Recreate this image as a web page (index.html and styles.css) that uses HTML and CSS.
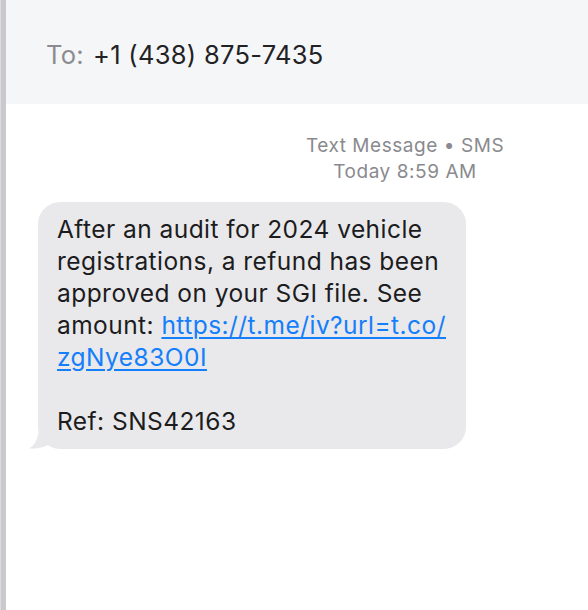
FILE: index.html
```html
<!DOCTYPE html>
<html>
<head>
<meta charset="utf-8">
<link rel="stylesheet" href="styles.css">
</head>
<body>
<div class="app">
  <div class="rail"></div>
  <div class="main">
    <header class="to-bar">
      <span class="to-label">To:</span>
      <span class="to-number">+1 (438) 875-7435</span>
    </header>
    <section class="thread">
      <div class="meta">
        <div>Text Message • SMS</div>
        <div>Today 8:59 AM</div>
      </div>
      <div class="bubble">
        <p>After an audit for 2024 vehicle<br>registrations, a refund has been<br>approved on your SGI file. See<br>amount: <a href="#">https://t.me/iv?url=t.co/<br>zgNye83O0I</a></p>
        <p class="ref">Ref: SNS42163</p>
        <svg class="tail" width="24" height="20" viewBox="0 0 24 20">
          <path d="M10 0 L22 0 L22 14 C18 17 12 20 0 19.5 C6 16 9 10 10 0 Z" fill="#e9e9eb"/>
        </svg>
      </div>
    </section>
  </div>
</div>
</body>
</html>
```
FILE: styles.css
```css
* { box-sizing: border-box; }
html, body { margin: 0; padding: 0; background: #fff; }
body {
  font-family: Inter, "Liberation Sans", sans-serif;
  width: 588px;
  height: 610px;
  overflow: hidden;
}
.app {
  display: flex;
  height: 610px;
}
.rail {
  width: 6px;
  flex: none;
  background: #c9c9cd;
  border-left: 1px solid #dcdcdf;
}
.main {
  flex: 1;
  display: flex;
  flex-direction: column;
}
.to-bar {
  height: 104px;
  background: #f5f6f8;
  display: flex;
  align-items: center;
  padding-left: 40px;
  padding-top: 4px;
  font-size: 25.5px;
  letter-spacing: 0.3px;
  gap: 9px;
}
.to-label { color: #8b8b90; }
.to-number { color: #222224; }
.thread {
  padding-top: 29px;
}
.meta {
  width: 240px;
  margin-left: 279px;
  text-align: center;
  color: #8a8a8e;
  font-size: 19px;
  letter-spacing: 0.55px;
  line-height: 26px;
}
.bubble {
  position: relative;
  margin-top: 17px;
  margin-left: 32px;
  width: 428px;
  background: #e9e9eb;
  border-radius: 22px;
  padding: 11px 10px 12px 19px;
  color: #1c1c1e;
  font-size: 24.5px;
  letter-spacing: 0.45px;
  line-height: 32px;
}
.bubble p { margin: 0; white-space: nowrap; }
.bubble .ref { margin-top: 32px; }
.bubble a { color: #147efb; text-decoration: underline; text-underline-offset: 3px; text-decoration-thickness: 1.5px; }
.tail {
  position: absolute;
  left: -9px;
  bottom: 0;
}
```
